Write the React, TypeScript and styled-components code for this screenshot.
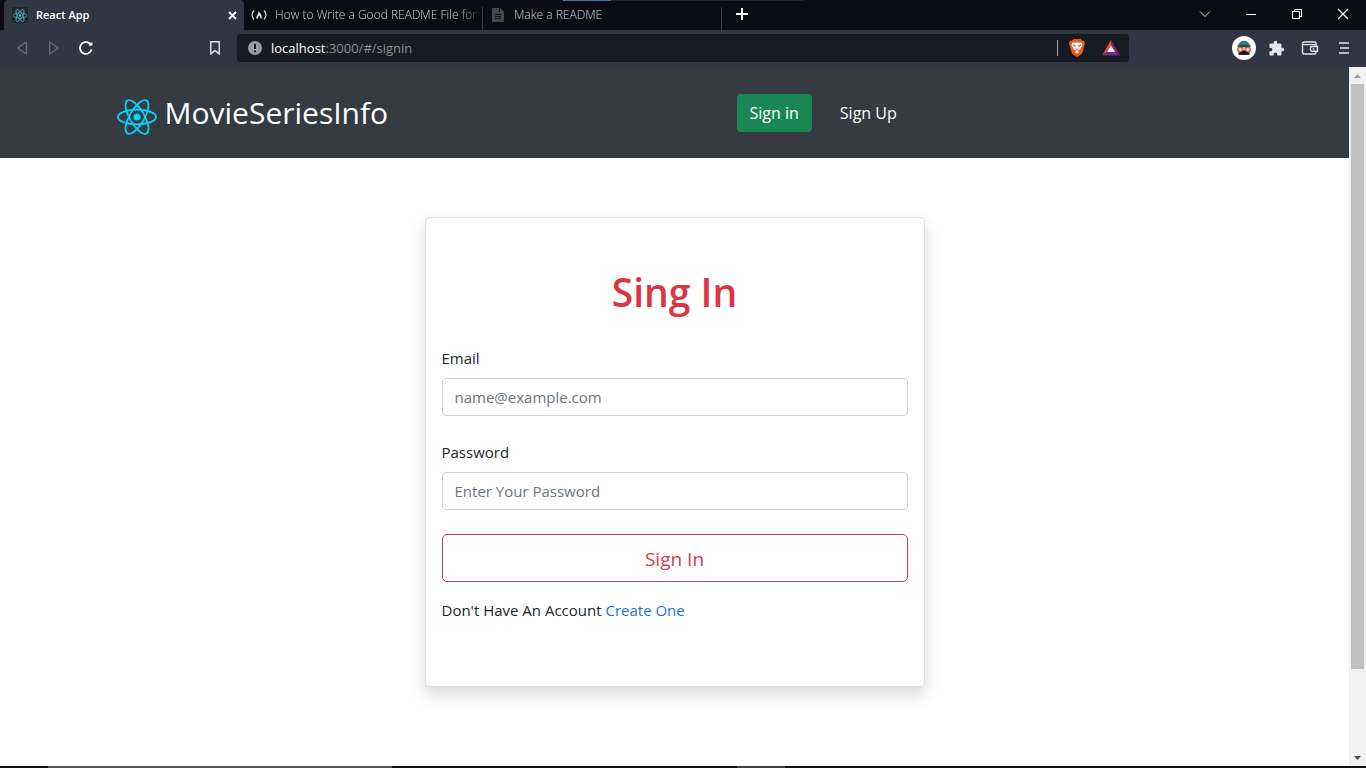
import React from "react";
import styled, { createGlobalStyle, css } from "styled-components";
import { MdExtension } from "react-icons/md";

const uiFont = css`
  font-family: "Open Sans", "Noto Sans", sans-serif;
`;

const GlobalStyle = createGlobalStyle`
  * { box-sizing: border-box; }
  body { margin: 0; background: #fff; color: #212529; ${uiFont} font-size: 15px; line-height: 24px; }
  button, input { font: inherit; }
  svg { display: block; flex: none; }
`;

const Window = styled.div`
  display: flex;
  flex-direction: column;
  min-height: 100vh;
`;

/* Browser chrome */

const TabStrip = styled.div`
  display: flex;
  align-items: stretch;
  height: 30px;
  padding-left: 4px;
  background: #0b0b16;
  position: relative;
`;

const LoadingBar = styled.div`
  position: absolute;
  top: 0;
  left: 563px;
  width: 241px;
  height: 1px;
  background: linear-gradient(to right, #3f76a8 48px, #1e2229 48px);
`;

const Tab = styled.div<{ $active?: boolean }>`
  display: flex;
  align-items: center;
  gap: 8px;
  width: ${(p) => (p.$active ? 240 : 239)}px;
  padding: 0 7px 0 8px;
  border-radius: 4px 4px 0 0;
  background: ${(p) => (p.$active ? "#323543" : "transparent")};
  color: ${(p) => (p.$active ? "#fff" : "#d2d2d8")};
  font-size: ${(p) => (p.$active ? 11 : 12)}px;
  font-weight: ${(p) => (p.$active ? 600 : 300)};
  line-height: 16px;
  position: relative;

  ${(p) =>
    !p.$active &&
    css`
      padding: 0 4px 0 7px;

      &::after {
        content: "";
        position: absolute;
        right: 0;
        top: 7px;
        bottom: 0;
        width: 1px;
        background: #393b46;
      }
    `}
`;

const TabTitle = styled.span<{ $fade?: boolean }>`
  flex: 1;
  min-width: 0;
  overflow: hidden;
  white-space: nowrap;
  ${(p) => p.$fade && "mask-image: linear-gradient(to right, #000 90%, rgba(0, 0, 0, 0.2));"}
`;

const IconButton = styled.button<{ $w?: number; $color?: string }>`
  display: flex;
  align-items: center;
  justify-content: center;
  width: ${(p) => p.$w ?? 32}px;
  height: 28px;
  padding: 0;
  border: 0;
  background: none;
  color: ${(p) => p.$color ?? "#e4e4ea"};
`;

const WindowControls = styled.div`
  display: flex;
  margin-left: auto;
`;

const Toolbar = styled.div`
  display: flex;
  align-items: center;
  height: 37px;
  padding: 0 6px 1px;
  background: #323543;
`;

const BookmarkSlot = styled.div`
  display: flex;
  justify-content: flex-end;
  width: 135px;
  padding-right: 6px;
`;

const AddressBar = styled.div`
  display: flex;
  align-items: center;
  flex: 1;
  height: 28px;
  padding: 0 2px 0 11px;
  border-radius: 4px;
  background: #191b22;
`;

const AddressText = styled.div`
  flex: 1;
  padding-left: 9px;
  color: #8b8e96;
  font-size: 13px;
  line-height: 20px;

  b {
    color: #fff;
    font-weight: 400;
  }
`;

const AddressDivider = styled.div`
  width: 1px;
  height: 16px;
  margin-right: 2px;
  background: #a0a2a8;
`;

const Extensions = styled.div`
  display: flex;
  align-items: center;
  margin-left: 99px;
`;

/* Page */

const Viewport = styled.div`
  display: flex;
  flex: 1;
`;

const Page = styled.div`
  flex: 1;
  min-width: 0;
`;

const Header = styled.header`
  background: #363a41;
  border-bottom: 1px solid #33363c;
`;

const Container = styled.div`
  display: grid;
  grid-template-columns: 5fr 4fr;
  align-items: center;
  max-width: 1140px;
  height: 90px;
  margin: 0 auto;
  padding: 2px 12px 0;
`;

const Brand = styled.a`
  display: flex;
  align-items: center;
  gap: 8px;
  color: #fff;
  font-size: 30px;
  line-height: 48px;
  text-decoration: none;

  svg {
    margin-top: 8px;
  }
`;

const Nav = styled.nav`
  display: flex;
  gap: 15px;
  font-size: 16px;
`;

const NavLink = styled.a<{ $active?: boolean }>`
  padding: 7px 13px;
  border-radius: 4px;
  background: ${(p) => (p.$active ? "#198754" : "transparent")};
  color: #fff;
  text-decoration: none;
`;

const Card = styled.form`
  max-width: 500px;
  margin: 59px auto 0;
  padding: 50px 16px 64px;
  border: 1px solid #dfdfdf;
  border-radius: 4px;
  background: #fff;
  box-shadow: 0 8px 16px rgba(0, 0, 0, 0.15);
`;

const Title = styled.h1`
  margin: 0 0 30px;
  color: #dc3545;
  font-size: 39px;
  font-weight: 600;
  line-height: 48px;
  text-align: center;
`;

const Field = styled.div`
  margin-bottom: 24px;
`;

const Label = styled.label`
  display: block;
  margin-bottom: 8px;
`;

const Input = styled.input`
  display: block;
  width: 100%;
  height: 38px;
  padding: 6px 12px;
  border: 1px solid #ced4da;
  border-radius: 4px;
  background: #fff;
  color: #212529;

  &::placeholder {
    color: #6c757d;
    opacity: 1;
  }
`;

const Submit = styled.button`
  display: block;
  width: 100%;
  height: 48px;
  margin-bottom: 16px;
  padding: 2px 0 0;
  border: 1px solid #bb4454;
  border-radius: 5px;
  background: #fff;
  color: #d04050;
  font-size: 19px;
`;

const Prompt = styled.p`
  margin: 0;

  a {
    color: #2370e0;
    text-decoration: none;
  }
`;

const Scrollbar = styled.div`
  display: flex;
  flex-direction: column;
  align-items: center;
  width: 17px;
  background: #f1f1f1;
`;

const ScrollArrow = styled.div<{ $down?: boolean }>`
  display: flex;
  align-items: center;
  justify-content: center;
  width: 17px;
  height: 17px;
  color: ${(p) => (p.$down ? "#505050" : "#a3a3a3")};

  svg {
    transform: ${(p) => (p.$down ? "rotate(180deg)" : "none")};
  }
`;

const ScrollTrack = styled.div`
  flex: 1;
  width: 13px;
  background: linear-gradient(#c1c1c1, #c1c1c1) top / 100% 88% no-repeat;
`;

const Taskbar = styled.div`
  height: 2px;
  background: linear-gradient(to right, #101114 48px, #55565a 48px, #55565a 392px, #101114 392px, #101114 737px, #404145 737px, #404145 785px, #101114 785px);
`;

const ReactLogo = ({ width, color, stroke = 1 }: { width: number; color: string; stroke?: number }) => (
  <svg width={width} height={Math.round(width * 0.9)} viewBox="-11.5 -10.35 23 20.7" aria-hidden="true">
    <circle r="2.05" fill={color} />
    <g stroke={color} strokeWidth={stroke} fill="none">
      <ellipse rx="11" ry="4.2" />
      <ellipse rx="11" ry="4.2" transform="rotate(60)" />
      <ellipse rx="11" ry="4.2" transform="rotate(120)" />
    </g>
  </svg>
);

const Favicon = styled.span`
  display: flex;
  align-items: center;
  justify-content: center;
  width: 16px;
  height: 16px;
  background: #20272d;
`;

const CampIcon = () => (
  <svg width="16" height="16" viewBox="0 0 16 16" fill="none" stroke="#d8d8e0" strokeWidth="1.2">
    <path d="M3 3.5Q-1 8 3 12.5M13 3.5Q17 8 13 12.5" />
    <path d="M7.6 4C8.6 5.6 11 8.4 10.9 11L9.6 12Q9.6 9.4 8.1 8.4Q7 9.6 6.8 12L5.2 11.2Q5.4 9.4 6.6 7.6Q7.6 6 7.6 4Z" fill="#e8e8ee" stroke="none" />
  </svg>
);

const PageIcon = () => (
  <svg width="16" height="16" viewBox="0 0 16 16">
    <path d="M2 1H9V5H14V15H2Z" fill="#45474c" />
    <path d="M10 1L14 5H10Z" fill="#45474c" />
    <path d="M5 7.5H11M5 9.5H11M5 11.5H11" stroke="#111219" />
  </svg>
);

const BraveIcon = () => (
  <svg width="18" height="20" viewBox="0 0 18 20">
    <path d="M5.5 1H12.5L14.2 2.7L15.7 2.4L17 5L16.4 7L14.5 14.5Q13.8 16.2 9 19Q4.2 16.2 3.5 14.5L1.6 7L1 5L2.3 2.4L3.8 2.7Z" fill="#e85a1c" />
    <path d="M4.6 4.5L7 4.8L9 4.4L11 4.8L13.4 4.5L14.6 7L12.5 10.2L12.3 11.8L10.7 11.8L9.7 12.8L11.2 14L9 15.6L6.8 14L8.3 12.8L7.3 11.8L5.7 11.8L5.5 10.2L3.4 7Z" fill="#fff" />
    <path d="M5 7L7.6 7.6L6.8 8.7ZM13 7L10.4 7.6L11.2 8.7ZM7.6 10.6L9 11.6L10.4 10.6L9 12.4Z" fill="#c2552e" stroke="#c2552e" strokeWidth="0.5" />
  </svg>
);

const BatIcon = () => (
  <svg width="18" height="16" viewBox="0 0 18 16">
    <path d="M9 0L0 15.5L5 12L9 5Z" fill="#ff4724" />
    <path d="M0 15.5H18L13 12H5Z" fill="#662d91" />
    <path d="M9 0L18 15.5L13 12L9 5Z" fill="#9e1f63" />
    <path d="M9 5.2L5 12H13Z" fill="#fff" />
  </svg>
);

const AvatarIcon = () => (
  <svg width="24" height="24" viewBox="0 0 24 24">
    <circle cx="12" cy="12" r="12" fill="#fff" />
    <path d="M6 10.5Q6.5 4.8 12 4.8Q17.5 4.8 18 10.5Z" fill="#397985" />
    <path d="M5.5 9.8Q12 7.6 18.5 9.8V11.3H5.5Z" fill="#24424e" />
    <path d="M6.5 11H17.5V18Q17.5 19 16.5 19H7.5Q6.5 19 6.5 18Z" fill="#22262e" />
    <path d="M10.5 11H13.5L14.5 14.6H9.5Z" fill="#e8ab93" />
    <circle cx="7.8" cy="13.6" r="2.9" fill="#e0654c" />
    <circle cx="16.2" cy="13.6" r="2.9" fill="#e0654c" />
    <circle cx="8.2" cy="13.4" r="1.5" fill="#fbd7c6" />
    <circle cx="15.8" cy="13.4" r="1.5" fill="#fbd7c6" />
    <path d="M7.5 17.5Q12 13 16.5 17.5Z" fill="#101319" />
  </svg>
);

const WalletIcon = () => (
  <svg width="18" height="16" viewBox="0 0 18 16" fill="none" stroke="currentColor" strokeWidth="1.4">
    <path d="M15 5V3.5Q15 2 13.5 2H3.5Q1.5 2 1.5 4V12Q1.5 14 3.5 14H13.5Q15 14 15 12.5V11.5" />
    <path d="M2 4.6H14Q15.6 4.6 15.6 6.4" />
    <path d="M16.5 6.5H11.3Q9.3 6.5 9.3 8.8Q9.3 11.2 11.3 11.2H16.5Z" />
    <path d="M11.7 8.9H13.4" />
  </svg>
);

const ArrowGlyph = () => (
  <svg width="7" height="4" viewBox="0 0 7 4" fill="currentColor">
    <path d="M3.5 0L7 4H0Z" />
  </svg>
);

const CloseGlyph = ({ size, weight }: { size: number; weight: number }) => (
  <svg width={size} height={size} viewBox={`0 0 ${size} ${size}`} stroke="#fff" strokeWidth={weight}>
    <path d={`M1 1L${size - 1} ${size - 1}M${size - 1} 1L1 ${size - 1}`} />
  </svg>
);

const BrowserTabs = () => (
  <TabStrip>
    <LoadingBar />
    <Tab $active>
      <Favicon>
        <ReactLogo width={14} color="#5bb5c9" stroke={1.3} />
      </Favicon>
      <TabTitle>React App</TabTitle>
      <IconButton $w={10} aria-label="Close tab">
        <CloseGlyph size={9} weight={1.8} />
      </IconButton>
    </Tab>
    <Tab>
      <CampIcon />
      <TabTitle $fade>How to Write a Good README File for</TabTitle>
    </Tab>
    <Tab>
      <PageIcon />
      <TabTitle>Make a README</TabTitle>
    </Tab>
    <IconButton $w={40} aria-label="New tab">
      <svg width="12" height="12" viewBox="0 0 12 12" stroke="#fff" strokeWidth="2">
        <path d="M6 0V12M0 6H12" />
      </svg>
    </IconButton>
    <WindowControls>
      <IconButton $w={46} aria-label="Search tabs">
        <svg width="12" height="8" viewBox="0 0 12 8" fill="none" stroke="#d8d8e0">
          <path d="M1 1.5L6 6.5L11 1.5" />
        </svg>
      </IconButton>
      <IconButton $w={46} aria-label="Minimise">
        <svg width="10" height="1" viewBox="0 0 10 1">
          <rect width="10" height="1" fill="#fff" />
        </svg>
      </IconButton>
      <IconButton $w={46} aria-label="Restore">
        <svg width="10" height="10" viewBox="0 0 10 10" fill="none" stroke="#fff">
          <path d="M0.5 2.5H7.5V9.5H0.5ZM2.5 2.5V0.5H9.5V7.5H7.5" />
        </svg>
      </IconButton>
      <IconButton $w={46} aria-label="Close window">
        <CloseGlyph size={12} weight={1.2} />
      </IconButton>
    </WindowControls>
  </TabStrip>
);

const BrowserToolbar = () => (
  <Toolbar>
    <IconButton aria-label="Back" $color="#686b78">
      <svg width="12" height="14" viewBox="0 0 12 14" fill="none" stroke="currentColor" strokeWidth="1.3" strokeLinejoin="round">
        <path d="M10.5 1V13L1.5 7Z" />
      </svg>
    </IconButton>
    <IconButton aria-label="Forward" $color="#686b78">
      <svg width="12" height="14" viewBox="0 0 12 14" fill="none" stroke="currentColor" strokeWidth="1.3" strokeLinejoin="round">
        <path d="M1.5 1V13L10.5 7Z" />
      </svg>
    </IconButton>
    <IconButton aria-label="Reload">
      <svg width="14" height="14" viewBox="0 0 14 14" fill="none" stroke="#fff" strokeWidth="1.7">
        <path d="M12.6 8.6A5.9 5.9 0 1 1 10.5 2.3" />
        <circle cx="11.6" cy="3.1" r="1.7" fill="#fff" stroke="none" />
        <path d="M9.5 4.5H13.4V1.2Z" fill="#fff" stroke="none" />
      </svg>
    </IconButton>
    <BookmarkSlot>
      <IconButton aria-label="Bookmark">
        <svg width="10" height="14" viewBox="0 0 10 14" fill="none" stroke="currentColor" strokeWidth="1.4">
          <path d="M0.8 0.8H9.2V13L5 9.5L0.8 13Z" />
        </svg>
      </IconButton>
    </BookmarkSlot>
    <AddressBar>
      <svg width="14" height="14" viewBox="0 0 14 14">
        <circle cx="7" cy="7" r="7" fill="#9a9ca3" />
        <path d="M7 2.7V8M7 9.4V11.2" stroke="#191b22" strokeWidth="2" />
      </svg>
      <AddressText>
        <b>localhost</b>:3000/#/signin
      </AddressText>
      <AddressDivider />
      <IconButton $w={34} aria-label="Brave Shields">
        <BraveIcon />
      </IconButton>
      <IconButton $w={33} aria-label="Brave Rewards">
        <BatIcon />
      </IconButton>
    </AddressBar>
    <Extensions>
      <IconButton aria-label="Profile">
        <AvatarIcon />
      </IconButton>
      <IconButton aria-label="Extensions">
        <MdExtension size={17} />
      </IconButton>
      <IconButton $w={36} aria-label="Wallet">
        <WalletIcon />
      </IconButton>
      <IconButton aria-label="Menu">
        <svg width="10" height="12" viewBox="0 0 10 12" stroke="currentColor" strokeWidth="1.5">
          <path d="M0 1H10M1 6H10M0 11H10" />
        </svg>
      </IconButton>
    </Extensions>
  </Toolbar>
);

const SignInForm = () => (
  <Card onSubmit={(e: React.FormEvent) => e.preventDefault()}>
    <Title>Sing In</Title>
    <Field>
      <Label htmlFor="email">Email</Label>
      <Input id="email" type="email" placeholder="name@example.com" />
    </Field>
    <Field>
      <Label htmlFor="password">Password</Label>
      <Input id="password" type="password" placeholder="Enter Your Password" />
    </Field>
    <Submit type="submit">Sign In</Submit>
    <Prompt>
      Don't Have An Account <a href="#/signup">Create One</a>
    </Prompt>
  </Card>
);

export default function App() {
  return (
    <Window>
      <GlobalStyle />
      <BrowserTabs />
      <BrowserToolbar />
      <Viewport>
        <Page>
          <Header>
            <Container>
              <Brand href="#/">
                <ReactLogo width={40} color="#00d8ff" />
                MovieSeriesInfo
              </Brand>
              <Nav>
                <NavLink href="#/signin" $active>
                  Sign in
                </NavLink>
                <NavLink href="#/signup">Sign Up</NavLink>
              </Nav>
            </Container>
          </Header>
          <main>
            <SignInForm />
          </main>
        </Page>
        <Scrollbar aria-hidden="true">
          <ScrollArrow>
            <ArrowGlyph />
          </ScrollArrow>
          <ScrollTrack />
          <ScrollArrow $down>
            <ArrowGlyph />
          </ScrollArrow>
        </Scrollbar>
      </Viewport>
      <Taskbar />
    </Window>
  );
}
